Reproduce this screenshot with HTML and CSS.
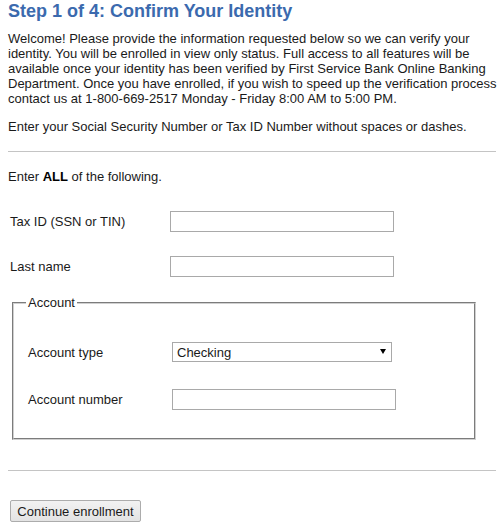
FILE: index.html
```html
<!DOCTYPE html>
<html lang="en">
<head>
<meta charset="utf-8">
<title>Step 1 of 4: Confirm Your Identity</title>
<link rel="stylesheet" href="styles.css">
</head>
<body>
<h1 class="title">Step 1 of 4: Confirm Your Identity</h1>
<p class="intro">Welcome! Please provide the information requested below so we can verify your identity. You will be enrolled in view only status. Full access to all features will be available once your identity has been verified by First Service Bank Online Banking Department. Once you have enrolled, if you wish to speed up the verification process contact us at 1-800-669-2517 Monday - Friday 8:00 AM to 5:00 PM.</p>
<p class="note">Enter your Social Security Number or Tax ID Number without spaces or dashes.</p>
<hr class="rule rule-top">
<form class="form">
  <p class="instr">Enter <b>ALL</b> of the following.</p>
  <div class="row row-tax">
    <label class="lbl" for="taxid">Tax ID (SSN or TIN)</label>
    <input class="field" id="taxid" type="text">
  </div>
  <div class="row row-last">
    <label class="lbl" for="lastname">Last name</label>
    <input class="field" id="lastname" type="text">
  </div>
  <fieldset class="account">
    <legend class="legend">Account</legend>
    <div class="row row-type">
      <label class="lbl" for="acctype">Account type</label>
      <span class="select-wrap">
        <select class="select" id="acctype">
          <option>Checking</option>
          <option>Savings</option>
        </select>
      </span>
    </div>
    <div class="row row-num">
      <label class="lbl" for="accnum">Account number</label>
      <input class="field" id="accnum" type="text">
    </div>
  </fieldset>
  <hr class="rule rule-bottom">
  <button class="btn" type="button">Continue enrollment</button>
</form>
</body>
</html>
```
FILE: styles.css
```css
html, body {
  background: #fff;
}
body {
  margin: 0;
  padding: 0 2px 0 8px;
  font-family: "Liberation Sans", Arial, sans-serif;
  font-size: 13px;
  line-height: 15px;
  color: #1a1a1a;
}
.title {
  margin: 1px 0 9px;
  font-size: 18px;
  line-height: 21px;
  font-weight: bold;
  color: #3b6aae;
}
.intro {
  margin: 0 -10px 13px 0;
}
.note {
  margin: 0;
}
.rule {
  border: 0;
  border-top: 1px solid #c4c4c4;
  height: 0;
  margin: 0;
}
.rule-top {
  margin-top: 17px;
}
.form {
  margin: 0;
}
.instr {
  margin: 17px 0 0;
}
.instr b {
  color: #000;
}
.row {
  display: grid;
  grid-template-columns: 162px auto;
  align-items: center;
  justify-items: start;
}
.lbl {
  padding-left: 2px;
}
.row-tax {
  margin-top: 27px;
}
.row-last {
  margin-top: 24px;
}
.field {
  box-sizing: border-box;
  width: 224px;
  height: 21px;
  margin: 0;
  padding: 1px 3px;
  border: 1px solid #a9a9a9;
  background: #fff;
  font: 13px "Liberation Sans", Arial, sans-serif;
  outline: none;
}
.account {
  margin: 18px 20px 0 4px;
  padding: 0 12px 28px;
  border: 2px groove #d0d0d0;
  min-width: 0;
}
.legend {
  padding: 0 2px;
  line-height: 15px;
}
.account .row {
  grid-template-columns: 146px auto;
}
.row-type {
  margin-top: 32px;
}
.row-num {
  margin-top: 27px;
}
.select-wrap {
  position: relative;
  display: inline-block;
}
.select {
  box-sizing: border-box;
  width: 220px;
  height: 20px;
  margin: 0;
  padding: 0 0 0 4px;
  border: 1px solid #a9a9a9;
  border-radius: 0;
  background: #fff;
  font: 13px "Liberation Sans", Arial, sans-serif;
  color: #1a1a1a;
  -webkit-appearance: none;
  appearance: none;
  outline: none;
}
.select-wrap::after {
  content: "";
  position: absolute;
  left: 208px;
  top: 7px;
  width: 0;
  height: 0;
  border-left: 3px solid transparent;
  border-right: 3px solid transparent;
  border-top: 5px solid #000;
  pointer-events: none;
}
.rule-bottom {
  margin-top: 30px;
}
.btn {
  display: block;
  box-sizing: border-box;
  margin: 29px 0 0 2px;
  width: 131px;
  height: 22px;
  padding: 0 6px;
  border: 1px solid #acacac;
  border-radius: 2px;
  background: linear-gradient(#f2f2f2, #e3e3e3);
  font: 13px "Liberation Sans", Arial, sans-serif;
  color: #1a1a1a;
}
```
